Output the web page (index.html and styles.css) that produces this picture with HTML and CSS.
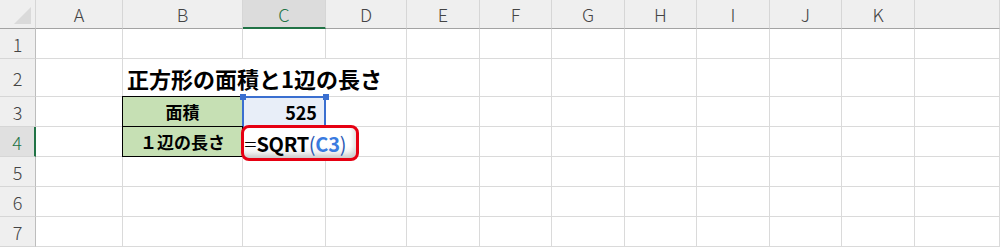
FILE: index.html
```html
<!DOCTYPE html>
<html lang="ja">
<head>
    <meta charset="utf-8">
    <link rel="stylesheet" href="styles.css">
</head>
<body>
    <div class="sheet">
        <div class="row head">
            <div class="corner"><span class="tri"></span></div>
            <div>A</div><div>B</div><div class="sel">C</div><div>D</div><div>E</div><div>F</div>
            <div>G</div><div>H</div><div>I</div><div>J</div><div>K</div><div></div>
        </div>
        <div class="row">
            <div class="rh">1</div>
            <div></div><div></div><div></div><div></div><div></div><div></div>
            <div></div><div></div><div></div><div></div><div></div><div></div>
        </div>
        <div class="row tall">
            <div class="rh">2</div>
            <div></div>
            <div class="title">正方形の面積と1辺の長さ</div>
            <div></div><div></div><div></div><div></div><div></div><div></div><div></div><div></div>
        </div>
        <div class="row">
            <div class="rh">3</div>
            <div></div>
            <div class="label">面積</div>
            <div class="num ref">525<span class="hd hl"></span><span class="hd hr"></span></div>
            <div></div><div></div><div></div><div></div><div></div><div></div><div></div><div></div><div></div>
        </div>
        <div class="row">
            <div class="rh sel">4</div>
            <div></div>
            <div class="label">１辺の長さ</div>
            <div class="edit">
                <div class="formula"><span class="eq">=</span><b>SQRT</b><span class="paren">(</span><b class="cref">C3</b><span class="paren">)</span></div>
            </div>
            <div></div><div></div><div></div><div></div><div></div><div></div><div></div><div></div><div></div>
        </div>
        <div class="row">
            <div class="rh">5</div>
            <div></div><div></div><div></div><div></div><div></div><div></div>
            <div></div><div></div><div></div><div></div><div></div><div></div>
        </div>
        <div class="row">
            <div class="rh">6</div>
            <div></div><div></div><div></div><div></div><div></div><div></div>
            <div></div><div></div><div></div><div></div><div></div><div></div>
        </div>
        <div class="row">
            <div class="rh">7</div>
            <div></div><div></div><div></div><div></div><div></div><div></div>
            <div></div><div></div><div></div><div></div><div></div><div></div>
        </div>
    </div>
</body>
</html>
```

FILE: styles.css
```css
body
{
    margin: 0;
    background: #fff;
    font-family: "Noto Sans CJK JP", "Noto Sans", sans-serif;
    color: #000;
}
.sheet
{
    width: 1000px;
    height: 248px;
    overflow: hidden;
}
.row
{
    display: grid;
    grid-template-columns: 36px 87px 120px 83px 81px 73px 72px 73px 72px 73px 72px 73px 1fr;
    height: 30px;
}
.row > div
{
    box-sizing: border-box;
    border-right: 1px solid #dadada;
    border-bottom: 1px solid #dadada;
    position: relative;
}
.tall
{
    height: 38px;
}

/* headers */
.head
{
    height: 29px;
    background: #efefef;
}
.head > div
{
    display: flex;
    align-items: center;
    justify-content: center;
    border-right-color: #d6d6d6;
    border-bottom-color: #a3a3a3;
    font-size: 18px;
    font-weight: 300;
    color: #444;
}
.head > .sel
{
    background: #dcdcdc;
    color: #217346;
    border-bottom: 2px solid #217346;
}
.corner .tri
{
    position: absolute;
    right: 4px;
    bottom: 4px;
    width: 17px;
    height: 17px;
    background: #dadada;
    clip-path: polygon(100% 0, 100% 100%, 0 100%);
}
.row > .rh
{
    display: flex;
    align-items: center;
    justify-content: center;
    background: #efefef;
    border-right-color: #bdbdbd;
    border-bottom-color: #d6d6d6;
    font-size: 18px;
    font-weight: 300;
    color: #444;
}
.row > .rh.sel
{
    background: #e0e0e0;
    color: #217346;
    border-right: 2px solid #217346;
}

/* cells */
.row > .title
{
    grid-column: span 3;
    display: flex;
    align-items: center;
    padding-left: 4px;
    font-size: 22px;
    font-weight: 700;
}
.label
{
    display: flex;
    align-items: center;
    justify-content: center;
    background: #c6e0b4;
    font-size: 17px;
    font-weight: 700;
}
.label::after
{
    content: "";
    position: absolute;
    top: -1px;
    left: -1px;
    right: -1px;
    bottom: -1px;
    border: 1px solid #000;
}
.num
{
    display: flex;
    align-items: center;
    justify-content: flex-end;
    padding-right: 8px;
    font-size: 18px;
    font-weight: 700;
}
.ref
{
    background: #e8eef8;
}
.ref::after
{
    content: "";
    position: absolute;
    top: -1px;
    left: -1px;
    right: -1px;
    bottom: -2px;
    border: 2px solid #3a6fd0;
    border-bottom: none;
}
.hd
{
    position: absolute;
    top: -3px;
    width: 6px;
    height: 6px;
    background: #3a6fd0;
    z-index: 2;
}
.hl
{
    left: -3px;
}
.hr
{
    right: -4px;
}

/* formula being edited */
.edit
{
    z-index: 3;
}
.formula
{
    position: absolute;
    left: -2px;
    top: -2px;
    box-sizing: border-box;
    width: 118px;
    height: 36px;
    border: 3px solid #e60012;
    border-radius: 8px;
    background: linear-gradient(#fff 60%, #e6e6e6);
    box-shadow: inset -3px -3px 4px rgba(0, 0, 0, 0.12);
    display: flex;
    align-items: center;
    padding-left: 1px;
    font-size: 20px;
    font-weight: 400;
    letter-spacing: -0.3px;
    white-space: nowrap;
}
.formula b
{
    font-weight: 700;
}
.eq
{
    font-weight: 300;
    transform: scaleX(1.15);
    margin-right: 1px;
}
.paren
{
    color: #2b58b4;
    font-weight: 400;
}
.cref
{
    color: #3a7be0;
}
```
